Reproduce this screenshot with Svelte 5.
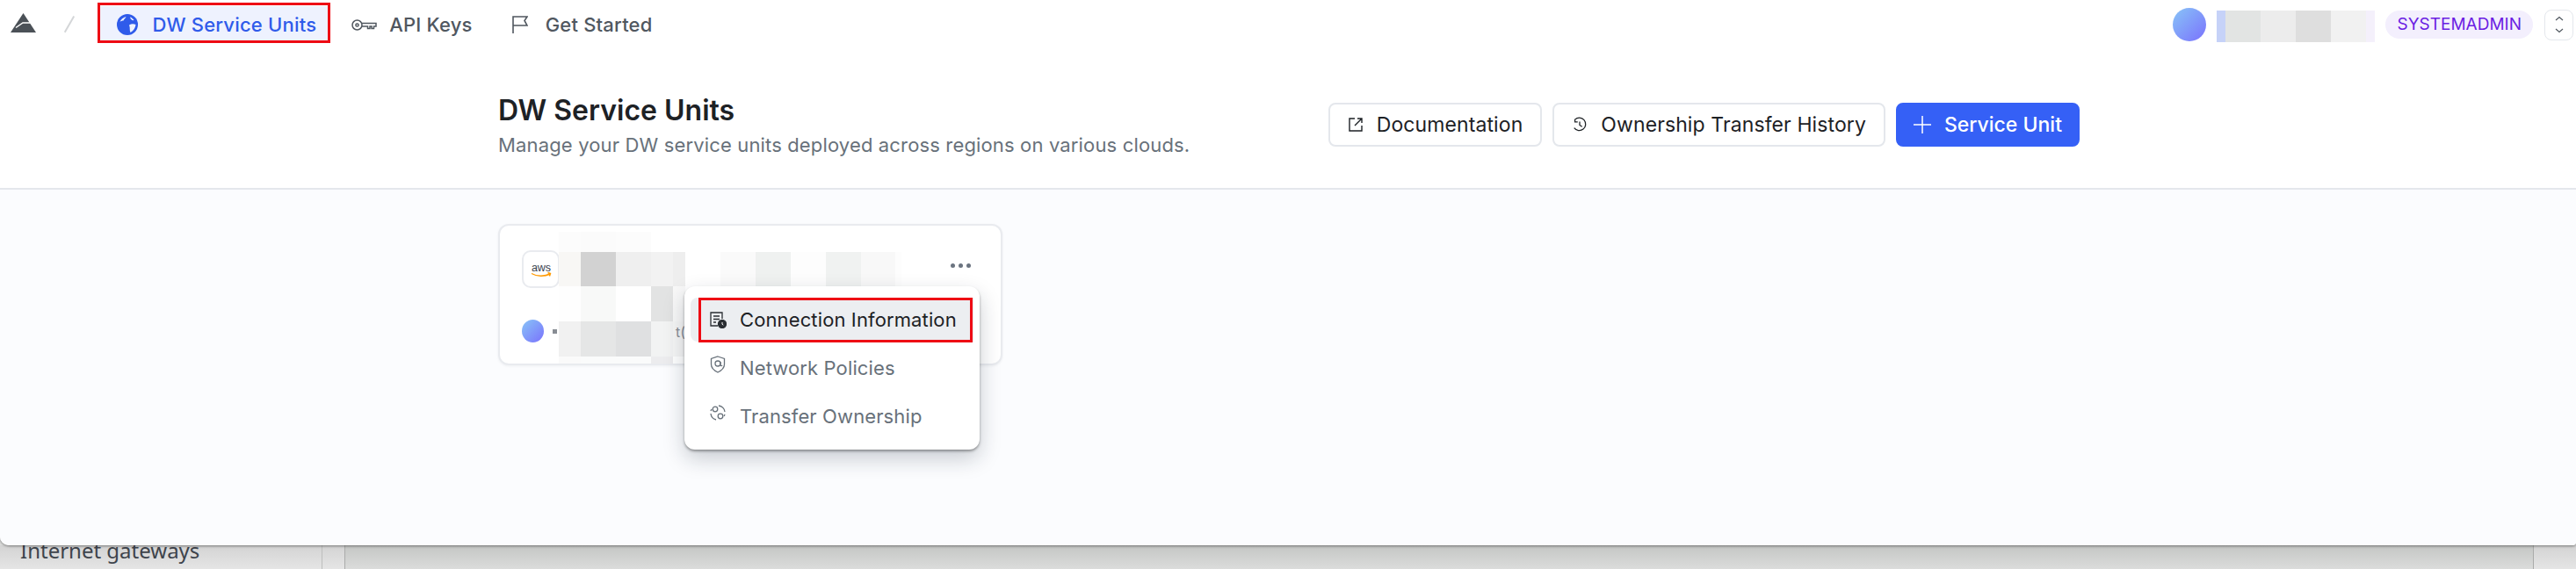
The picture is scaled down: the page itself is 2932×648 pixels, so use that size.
<script>
	// pixelated blocks that hide names in the screenshot
	const userBlocks = [
		[10, '#c6d2f8'], [40, '#e2e4e3'], [40, '#ececec'], [40, '#dedede'], [40, '#f1f1f1'], [10, '#f4f0fb']
	];
	const nameRows = [
		{ h: 23, cells: [[25, '#fcfcfc'], [40, '#fbfbfb'], [40, '#fcfcfc'], [25, '#ffffff']] },
		{ h: 39, cells: [[25, '#f8f7f5'], [40, '#d2d2d2'], [40, '#efefef'], [25, '#f2f2f2'], [14, '#eeeeee'], [40, '#ffffff'], [40, '#fafafa'], [40, '#eff1f0'], [40, '#fdfdfd'], [40, '#f0f2f1'], [39, '#f8f8f8'], [7, '#fdfdfd']] },
		{ h: 40, cells: [[25, '#fefefe'], [40, '#f8f9f8'], [40, '#ffffff'], [25, '#e2e3e3'], [14, '#f8f8f8']] },
		{ h: 40, cells: [[25, '#f1f1f1'], [40, '#e5e6e6'], [40, '#dfe0e1'], [25, '#f2f3f3'], [14, '#f6f6f6']] },
		{ h: 8, cells: [[25, '#fafafa'], [40, '#fafbfb'], [40, '#fafbfb'], [25, '#ececee']] }
	];
	const menu = [
		{ label: 'Connection Information', active: true },
		{ label: 'Network Policies' },
		{ label: 'Transfer Ownership' }
	];
</script>

<div class="page">
	<div class="panel">
		<nav class="topbar">
			<svg class="logo" viewBox="0 0 29 22" width="29" height="22">
				<path d="M14.500 0L29 22H0z" fill="#4b5157" />
				<path d="M6 16.500l8-5.500h9" fill="none" stroke="#fff" stroke-width="1.500" />
			</svg>
			<span class="slash"></span>
			<a class="tab current">
				<svg viewBox="0 0 24 24" width="24" height="24">
					<circle cx="12" cy="12" r="12" fill="#2f5bea" />
					<path d="M3.500 9c1-3 3.500-5 7-6-.5 2-2.500 2.500-3 4.500-1.500 0-3 .5-4 1.500z" fill="#eef2fe" />
					<path d="M14 12.500c2.500-1.500 5-1.500 7.500-.5-.5 4-2.500 7-6 9-1.500-2.500 0-5-1.500-8.500z" fill="#eef2fe" />
					<path d="M15 3.500c2 .5 3.500 2 4.500 3.500-1.500.5-3.500 0-4.500-3.500z" fill="#eef2fe" />
				</svg>
				DW Service Units
			</a>
			<a class="tab">
				<svg viewBox="0 0 29 13" width="29" height="13" fill="none" stroke="#50575f" stroke-width="1.500">
					<circle cx="6.500" cy="6.500" r="5.500" />
					<circle cx="6.500" cy="6.500" r="1.600" />
					<path d="M12 4.500h16v3.500h-2.500v2.500H23V8h-2v2.500h-2.500V8H12" />
				</svg>
				API Keys
			</a>
			<a class="tab">
				<svg class="flag" viewBox="0 0 20 20" width="20" height="20" fill="none" stroke="#50575f" stroke-width="1.600">
					<path d="M3 20V1h16l-3 4.500 3 5.500H3" />
				</svg>
				Get Started
			</a>

			<div class="user">
				<span class="avatar big"></span>
				<div class="blocks">
					{#each userBlocks as [w, c]}
						<span style="width:{w}px;background:{c}"></span>
					{/each}
				</div>
				<span class="role">SYSTEMADMIN</span>
				<button class="updown" aria-label="Switch">
					<svg viewBox="0 0 12 22" width="12" height="22" fill="none" stroke="#50575f" stroke-width="1.200">
						<path d="M2 6l4-3.500L10 6M2 16l4 3.500 4-3.500" />
					</svg>
				</button>
			</div>
		</nav>

		<header class="head">
			<div class="head-text">
				<h1>DW Service Units</h1>
				<p>Manage your DW service units deployed across regions on various clouds.</p>
			</div>
			<div class="actions">
				<button class="btn">
					<svg viewBox="0 0 18 18" width="18" height="18" fill="none" stroke="#1d2125" stroke-width="1.400">
						<path d="M8 2H2v14h14v-6M8 10l8-8M11 2h5v5" />
					</svg>
					Documentation
				</button>
				<button class="btn">
					<svg viewBox="0 0 20 20" width="18" height="20" fill="none" stroke="#1d2125" stroke-width="1.400">
						<path d="M4 3.500A8 8 0 1 1 3 14M4 3v3.500h3.500M10 6v4.500l3 2" />
					</svg>
					Ownership Transfer History
				</button>
				<button class="btn primary">
					<svg viewBox="0 0 20 20" width="20" height="20" fill="none" stroke="#fff" stroke-width="1.500">
						<path d="M10 0v20M0 10h20" />
					</svg>
					Service Unit
				</button>
			</div>
		</header>

		<main class="content">
			<section class="card">
				<div class="card-top">
					<span class="aws">
						<svg viewBox="0 0 28 24" width="28" height="24">
							<text x="14" y="14" text-anchor="middle" font-family="Liberation Sans, sans-serif" font-size="12.500" fill="#3a4350">aws</text>
							<path d="M3 16.500c6 3.500 15 3.500 21 .5M21.500 15.500l3 1-1 3" fill="none" stroke="#f90" stroke-width="1.400" />
						</svg>
					</span>
					<span class="dots"><i></i><i></i><i></i></span>
				</div>
				<div class="card-bottom">
					<span class="avatar small"></span>
					<span class="dot"></span>
				</div>
				<div class="mosaic">
					{#each nameRows as row}
						<div class="mosaic-row" style="height:{row.h}px">
							{#each row.cells as [w, c]}
								<span style="width:{w}px;background:{c}"></span>
							{/each}
						</div>
					{/each}
				</div>
				<span class="frag frag-low">t(</span>
			</section>

			<ul class="menu">
				{#each menu as item, i}
					<li class:active={item.active}>
						<svg class:up={!item.active} viewBox="0 0 20 20" width="20" height="20" fill="none" stroke={item.active ? '#2a2e33' : '#68717a'} stroke-width="1.300">
							{#if i === 0}
								<path d="M15 9V2H2v15h8M5 6h7M5 9.500h7M5 13h3" />
								<circle cx="15" cy="15" r="4.500" fill="#2a2e33" />
								<path d="M15 13v2.200l1.300 1" stroke="#fff" stroke-width="1" />
							{:else if i === 1}
								<path d="M10 1l7.500 2.500V10c0 4-3.500 7-7.500 9-4-2-7.500-5-7.500-9V3.500z" />
								<circle cx="10" cy="9" r="3" />
								<path d="M13 7v3.500c0 1.500 1.500 1.500 2 .5" />
							{:else}
								<circle cx="7" cy="6" r="2.800" />
								<circle cx="13" cy="14" r="2.800" />
								<path d="M11 2a8 8 0 0 1 7 7M2 11a8 8 0 0 0 6 7M2 8a8 8 0 0 1 1-2M18 12a8 8 0 0 1-1 2" />
							{/if}
						</svg>
						{item.label}
					</li>
				{/each}
			</ul>
		</main>
	</div>

	<!-- what shows behind the panel -->
	<div class="behind">
		<span class="gateways">Internet gateways</span>
		<span class="rail"></span>
		<div class="behind-main"></div>
		<div class="behind-end"></div>
	</div>

	<!-- annotation rectangles drawn on the screenshot -->
	<span class="mark mark-tab"></span>
	<span class="mark mark-item"></span>
</div>

<style>
	:global(body) {
		margin: 0;
		background: #dcdddc;
	}

	.page {
		position: relative;
		width: 2932px;
		height: 648px;
		overflow: hidden;
		font-family: Inter, "Liberation Sans", sans-serif;
		color: #1d2125;
	}

	.panel {
		height: 621px;
		display: flex;
		flex-direction: column;
		background: #fff;
		border-radius: 0 0 4px 10px;
		box-shadow: 0 1px 3px rgba(0, 0, 0, 0.45);
		position: relative;
		z-index: 1;
	}

	.topbar {
		height: 54px;
		box-sizing: border-box;
		padding: 2px 3px 0 12px;
		display: flex;
		align-items: center;
		flex-shrink: 0;
	}

	.logo {
		margin: -4px 37px 0 0;
	}

	.slash {
		width: 1.5px;
		height: 21px;
		background: #d4d6d8;
		transform: rotate(30deg);
		margin: -1px 34px 0 0;
	}

	.tab {
		display: flex;
		align-items: center;
		gap: 14px;
		height: 42px;
		padding: 0 16px;
		margin-left: 11px;
		font-size: 22px;
		font-weight: 500;
		letter-spacing: 0.2px;
		color: #50575f;
	}

	.tab.current {
		color: #2f5bea;
		background: #eef2fe;
		gap: 17px;
		padding: 0 13px 0 19px;
		margin-left: 0;
	}

	.flag {
		margin-right: 6px;
	}

	.user {
		margin-left: auto;
		display: flex;
		align-items: center;
	}

	.avatar {
		display: block;
		border-radius: 50%;
		background: linear-gradient(135deg, #88c4f7, #7a72fd);
		flex-shrink: 0;
	}

	.avatar.big {
		width: 38px;
		height: 38px;
		margin-right: 12px;
	}

	.blocks {
		display: flex;
		height: 36px;
		margin: 4px 12px 0 0;
	}

	.blocks span {
		display: block;
	}

	.role {
		height: 32px;
		line-height: 32px;
		padding: 0 13px;
		border-radius: 16px;
		background: #f3effd;
		color: #6b1ee3;
		font-size: 19px;
		margin-right: 13px;
	}

	.updown {
		width: 33px;
		height: 35px;
		padding: 0;
		border: 1.5px solid #e4e7ec;
		border-radius: 8px;
		background: #fff;
		display: flex;
		align-items: center;
		justify-content: center;
	}

	.head {
		height: 162px;
		flex-shrink: 0;
		box-sizing: border-box;
		padding: 0 565px 0 567px;
		border-bottom: 2px solid #e4e7ec;
		display: flex;
		justify-content: space-between;
		align-items: flex-start;
	}

	h1 {
		margin: 52px 0 0;
		font-size: 32px;
		line-height: 40px;
		font-weight: 600;
		color: #1d2125;
	}

	.head p {
		margin: 3px 0 0;
		font-size: 22px;
		letter-spacing: 0.15px;
		line-height: 32px;
		color: #68717a;
	}

	.actions {
		display: flex;
		gap: 12px;
		margin-top: 63px;
	}

	.btn {
		height: 50px;
		box-sizing: border-box;
		padding: 0 20px 0 20px;
		display: flex;
		align-items: center;
		gap: 15px;
		font-family: inherit;
		font-size: 23px;
		letter-spacing: 0.1px;
		font-weight: 400;
		color: #1d2125;
		background: #fff;
		border: 2px solid #e4e7ec;
		border-radius: 8px;
		white-space: nowrap;
	}

	.btn.primary {
		background: #3560f6;
		border-color: #3560f6;
		color: #fff;
		font-weight: 500;
		letter-spacing: 0;
		padding: 0 18px 0 18px;
		gap: 15px;
	}

	.content {
		flex: 1;
		position: relative;
		background: #fbfcfe;
		padding: 39px 0 0 567px;
		border-radius: 0 0 4px 10px;
	}

	.card {
		position: relative;
		width: 574px;
		height: 161px;
		box-sizing: border-box;
		background: #fff;
		border: 2px solid #e9ebef;
		border-radius: 12px;
		box-shadow: 0 1px 3px rgba(20, 30, 50, 0.06);
		padding: 28px 34px 0 25px;
	}

	.mosaic {
		position: absolute;
		left: 67px;
		top: 7px;
	}

	.mosaic-row {
		display: flex;
	}

	.mosaic-row span {
		display: block;
		height: 100%;
	}

	.frag {
		position: absolute;
		font-size: 16px;
		line-height: 16px;
		color: #8a8f96;
	}

	.frag-low {
		left: 200px;
		top: 113px;
	}

	.card-top {
		display: flex;
		justify-content: space-between;
		align-items: flex-start;
	}

	.aws {
		width: 43px;
		height: 43px;
		box-sizing: border-box;
		border: 2px solid #e9ebef;
		border-radius: 10px;
		display: flex;
		align-items: center;
		justify-content: center;
	}

	.dots {
		display: flex;
		gap: 4px;
		margin-top: 15px;
	}

	.dots i {
		display: block;
		width: 5px;
		height: 5px;
		border-radius: 50%;
		background: #6b7480;
	}

	.card-bottom {
		display: flex;
		align-items: center;
		margin-top: 36px;
		gap: 10px;
	}

	.avatar.small {
		width: 25px;
		height: 26px;
	}

	.dot {
		width: 5px;
		height: 5px;
		background: #888d94;
	}

	.menu {
		position: absolute;
		left: 779px;
		top: 110px;
		width: 336px;
		height: 186px;
		box-sizing: border-box;
		margin: 0;
		padding: 13px 7px;
		list-style: none;
		background: #fff;
		border-radius: 12px;
		box-shadow: 0 2px 3px rgba(0, 0, 0, 0.35), 0 10px 24px rgba(20, 30, 50, 0.22);
		z-index: 2;
	}

	.menu li {
		height: 50px;
		margin-bottom: 5px;
		padding-left: 21px;
		display: flex;
		align-items: center;
		gap: 15px;
		font-size: 22px;
		letter-spacing: 0.12px;
		color: #68717a;
		border-radius: 8px 0 0 8px;
	}

	.menu li.active {
		background: #eceef1;
		color: #1d2125;
	}

	.menu li svg.up {
		margin-top: -9px;
	}

	.behind {
		position: absolute;
		left: 0;
		right: 0;
		top: 621px;
		bottom: 0;
		display: flex;
		background: linear-gradient(#d3d3d3, #e5e5e5);
	}

	.gateways {
		width: 366px;
		padding-left: 23px;
		box-sizing: border-box;
		font-family: "Noto Sans", sans-serif;
		font-size: 24px;
		line-height: 24px;
		margin-top: -6px;
		color: #3e444c;
	}

	.rail {
		width: 27px;
		border-left: 1px solid #bdbebd;
		border-right: 1px solid #aaabaa;
		box-sizing: border-box;
	}

	.behind-main {
		width: 2490px;
		background: linear-gradient(#c4c6c4, #dbdcdb);
		border-right: 1px solid #aaabaa;
	}

	.behind-end {
		flex: 1;
	}

	.mark {
		position: absolute;
		z-index: 3;
		box-sizing: border-box;
		border: 3px solid #ee0b14;
		pointer-events: none;
	}

	.mark-tab {
		left: 111px;
		top: 3px;
		width: 265px;
		height: 46px;
	}

	.mark-item {
		left: 795px;
		top: 339px;
		width: 312px;
		height: 51px;
	}
</style>
